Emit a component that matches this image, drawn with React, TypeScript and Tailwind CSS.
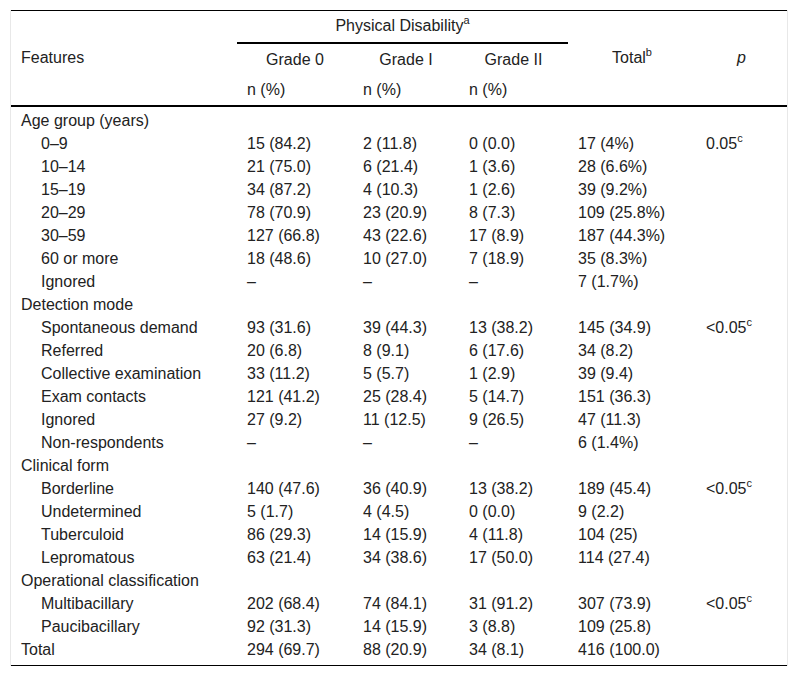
import React from 'react';

interface Row {
    label: string;
    indent?: boolean;
    g0?: string;
    g1?: string;
    g2?: string;
    total?: string;
    p?: string;
}

const rows: Row[] = [
    { label: 'Age group (years)' },
    { label: '0–9', indent: true, g0: '15 (84.2)', g1: '2 (11.8)', g2: '0 (0.0)', total: '17 (4%)', p: '0.05' },
    { label: '10–14', indent: true, g0: '21 (75.0)', g1: '6 (21.4)', g2: '1 (3.6)', total: '28 (6.6%)' },
    { label: '15–19', indent: true, g0: '34 (87.2)', g1: '4 (10.3)', g2: '1 (2.6)', total: '39 (9.2%)' },
    { label: '20–29', indent: true, g0: '78 (70.9)', g1: '23 (20.9)', g2: '8 (7.3)', total: '109 (25.8%)' },
    { label: '30–59', indent: true, g0: '127 (66.8)', g1: '43 (22.6)', g2: '17 (8.9)', total: '187 (44.3%)' },
    { label: '60 or more', indent: true, g0: '18 (48.6)', g1: '10 (27.0)', g2: '7 (18.9)', total: '35 (8.3%)' },
    { label: 'Ignored', indent: true, g0: '–', g1: '–', g2: '–', total: '7 (1.7%)' },
    { label: 'Detection mode' },
    { label: 'Spontaneous demand', indent: true, g0: '93 (31.6)', g1: '39 (44.3)', g2: '13 (38.2)', total: '145 (34.9)', p: '<0.05' },
    { label: 'Referred', indent: true, g0: '20 (6.8)', g1: '8 (9.1)', g2: '6 (17.6)', total: '34 (8.2)' },
    { label: 'Collective examination', indent: true, g0: '33 (11.2)', g1: '5 (5.7)', g2: '1 (2.9)', total: '39 (9.4)' },
    { label: 'Exam contacts', indent: true, g0: '121 (41.2)', g1: '25 (28.4)', g2: '5 (14.7)', total: '151 (36.3)' },
    { label: 'Ignored', indent: true, g0: '27 (9.2)', g1: '11 (12.5)', g2: '9 (26.5)', total: '47 (11.3)' },
    { label: 'Non-respondents', indent: true, g0: '–', g1: '–', g2: '–', total: '6 (1.4%)' },
    { label: 'Clinical form' },
    { label: 'Borderline', indent: true, g0: '140 (47.6)', g1: '36 (40.9)', g2: '13 (38.2)', total: '189 (45.4)', p: '<0.05' },
    { label: 'Undetermined', indent: true, g0: '5 (1.7)', g1: '4 (4.5)', g2: '0 (0.0)', total: '9 (2.2)' },
    { label: 'Tuberculoid', indent: true, g0: '86 (29.3)', g1: '14 (15.9)', g2: '4 (11.8)', total: '104 (25)' },
    { label: 'Lepromatous', indent: true, g0: '63 (21.4)', g1: '34 (38.6)', g2: '17 (50.0)', total: '114 (27.4)' },
    { label: 'Operational classification' },
    { label: 'Multibacillary', indent: true, g0: '202 (68.4)', g1: '74 (84.1)', g2: '31 (91.2)', total: '307 (73.9)', p: '<0.05' },
    { label: 'Paucibacillary', indent: true, g0: '92 (31.3)', g1: '14 (15.9)', g2: '3 (8.8)', total: '109 (25.8)' },
    { label: 'Total', g0: '294 (69.7)', g1: '88 (20.9)', g2: '34 (8.1)', total: '416 (100.0)' },
];

const Sup = ({ children }: { children: React.ReactNode }) => (
    <sup className="text-[11px] leading-none relative -top-[7px]">{children}</sup>
);

const App = () => {
    return (
        <div className="min-h-screen bg-white pt-[10px] px-[10px] font-['Liberation_Sans',Arial,sans-serif] text-[16px] text-[#222]">
            <div className="border-x border-[#e8e8e8]">
                <table className="w-full table-fixed border-collapse border-t border-b border-black">
                    <colgroup>
                        <col className="w-[226px]" />
                        <col className="w-[116px]" />
                        <col className="w-[106px]" />
                        <col className="w-[109px]" />
                        <col className="w-[128px]" />
                        <col className="w-[91px]" />
                    </colgroup>
                    <thead className="border-b-2 border-black">
                        <tr className="h-[32px]">
                            <th rowSpan={3} className="px-[10px] text-left font-normal align-middle">Features</th>
                            <th colSpan={3} className="p-0 font-normal text-center border-b-2 border-black">
                                Physical Disability<Sup>a</Sup>
                            </th>
                            <th rowSpan={3} className="px-[10px] font-normal text-center align-middle">
                                Total<Sup>b</Sup>
                            </th>
                            <th rowSpan={3} className="px-[10px] font-normal italic text-center align-middle">p</th>
                        </tr>
                        <tr className="h-[33px]">
                            <th className="px-[10px] font-normal text-center">Grade 0</th>
                            <th className="px-[10px] font-normal text-center">Grade I</th>
                            <th className="px-[10px] font-normal text-center">Grade II</th>
                        </tr>
                        <tr className="h-[30px]">
                            <th className="px-[10px] font-normal text-left">n (%)</th>
                            <th className="px-[10px] font-normal text-left">n (%)</th>
                            <th className="px-[10px] font-normal text-left">n (%)</th>
                        </tr>
                    </thead>
                    <tbody>
                        {rows.map((r, i) => {
                            const first = i === 0;
                            const last = i === rows.length - 1;
                            const pad = first ? 'pt-[2px] h-[25px]' : last ? 'pb-[4px] h-[27px]' : 'h-[23px]';
                            return (
                                <tr key={i} className="leading-[23px]">
                                    <td className={`${pad} py-0 ${r.indent ? 'pl-[30px]' : 'pl-[10px]'} pr-[6px] whitespace-nowrap`}>
                                        {r.label}
                                    </td>
                                    <td className={`${pad} px-[10px] whitespace-nowrap`}>{r.g0}</td>
                                    <td className={`${pad} px-[10px] whitespace-nowrap`}>{r.g1}</td>
                                    <td className={`${pad} px-[10px] whitespace-nowrap`}>{r.g2}</td>
                                    <td className={`${pad} px-[10px] whitespace-nowrap`}>{r.total}</td>
                                    <td className={`${pad} px-[10px] whitespace-nowrap`}>
                                        {r.p && (
                                            <>
                                                {r.p}
                                                <Sup>c</Sup>
                                            </>
                                        )}
                                    </td>
                                </tr>
                            );
                        })}
                    </tbody>
                </table>
            </div>
        </div>
    );
};

export default App;
